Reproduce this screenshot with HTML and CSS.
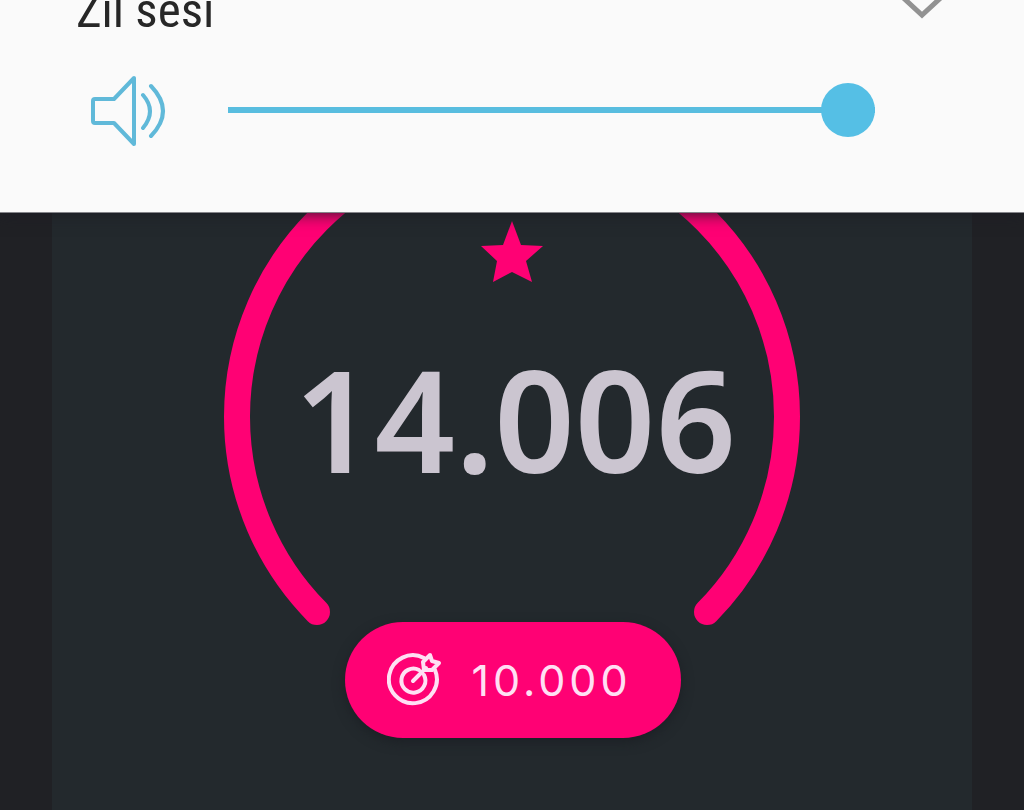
FILE: index.html
```html
<!DOCTYPE html>
<html lang="tr">
<head>
<meta charset="utf-8">
<meta name="viewport" content="width=device-width, initial-scale=1">
<title>Zil sesi</title>
<link rel="stylesheet" href="styles.css">
</head>
<body>
<header class="volume">
  <div class="volume-head">
    <label class="volume-title" for="ring">Zil sesi</label>
    <button class="expand" type="button" aria-label="Genişlet">
      <svg width="52" height="20" viewBox="0 0 52 20"><path d="M2-7 26 15 50-7"/></svg>
    </button>
  </div>
  <div class="volume-row">
    <svg class="speaker" width="78" height="72" viewBox="0 0 78 72">
      <path d="M45 4V70L25 49H6Q4 49 4 47V27Q4 25 6 25H25Z"/>
      <path d="M54 21Q68 37 54 54M62 12Q86 37 62 62"/>
    </svg>
    <input class="slider" id="ring" type="range" min="0" max="15" value="15">
  </div>
</header>
<main class="stage">
  <section class="card">
    <div class="gauge">
      <svg class="ring" viewBox="0 0 576 409">
        <path class="arc" d="M93 399A275 277 0 1 1 483 399"/>
        <path class="star" d="M288 8 297 32 319 33 302 48 308 69 288 59 269 69 273 48 257 33 279 32Z"/>
      </svg>
      <output class="steps">14.006</output>
    </div>
    <button class="goal" type="button">
      <svg class="target" width="56" height="56" viewBox="0 0 56 56">
        <path d="M37 6A24 24 0 1 0 48 18"/>
        <path d="M32 18A12 12 0 1 0 37 23M26 29 39 16M37 18 36 10 43 3 45 9 52 11 45 18Z"/>
      </svg>
      <span>10.000</span>
    </button>
  </section>
</main>
</body>
</html>
```
FILE: styles.css
```css
* { box-sizing: border-box; }
body {
  margin: 0;
  min-height: 100vh;
  display: flex;
  flex-direction: column;
  background: #202125;
  font-family: "Noto Sans", sans-serif;
  overflow-x: hidden;
}
button {
  border: 0;
  padding: 0;
  background: none;
  font: inherit;
}
svg { display: block; }
.volume {
  position: relative;
  z-index: 1;
  padding: 0 76px 66px;
  background: #fafafa;
  border-bottom: 1px solid #85858a;
  box-shadow: 0 0 16px #1b1b24;
}
.volume-head {
  display: flex;
  justify-content: space-between;
  align-items: flex-start;
}
.volume-title {
  font: 49px/22px "Roboto Condensed", "Liberation Sans Narrow", Roboto, sans-serif;
  color: #272727;
}
.expand path {
  fill: none;
  stroke: #929292;
  stroke-width: 5;
}
.volume-row {
  display: flex;
  align-items: center;
  gap: 61px;
  margin: 52px 73px 0 13px;
}
.speaker {
  flex: none;
  fill: none;
  stroke: #60b9d9;
  stroke-width: 4;
  stroke-linecap: round;
  stroke-linejoin: round;
}
.slider {
  flex: 1;
  min-width: 0;
  height: 54px;
  margin: 0;
  appearance: none;
  background: linear-gradient(#58bddf, #58bddf) center / 100% 6px no-repeat;
}
.slider::-webkit-slider-thumb {
  appearance: none;
  width: 54px;
  height: 54px;
  border-radius: 50%;
  background: #55bfe5;
}
.stage {
  flex: 1;
  display: flex;
  padding: 0 52px;
}
.card {
  flex: 1;
  display: flex;
  flex-direction: column;
  align-items: center;
  padding-bottom: 72px;
  background: #23292d;
}
.gauge {
  display: grid;
  width: 100%;
  max-width: 576px;
}
.ring, .steps { grid-area: 1 / 1; }
.ring {
  width: 100%;
  overflow: visible;
}
.arc {
  fill: none;
  stroke: #ff0174;
  stroke-width: 26;
  stroke-linecap: round;
}
.star { fill: #ff0174; }
.steps {
  align-self: center;
  padding-left: 6px;
  text-align: center;
  font-size: 141px;
  font-weight: 600;
  line-height: 208px;
  color: #cbc5d0;
}
.goal {
  display: flex;
  align-items: center;
  gap: 28px;
  height: 116px;
  margin-left: 2px;
  padding: 0 49px 0 42px;
  border-radius: 58px;
  background: #ff0174;
  box-shadow: 0 4px 12px #1c2025;
  color: #ffe0f4;
  font-family: Inter, "Noto Sans", sans-serif;
  font-size: 43px;
  line-height: 60px;
  letter-spacing: 4px;
}
.target {
  fill: none;
  stroke: #ffe0f4;
  stroke-width: 4;
  stroke-linecap: round;
  stroke-linejoin: round;
}
```
